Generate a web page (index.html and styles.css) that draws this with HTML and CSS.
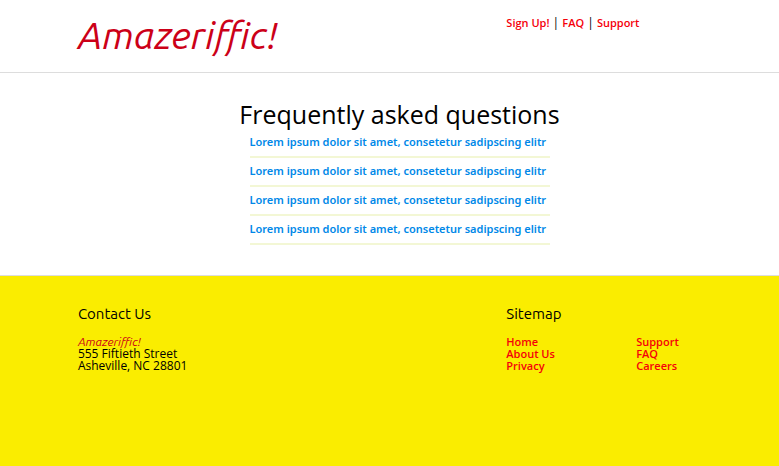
FILE: index.html
```html
<!DOCTYPE html>
<html lang="en">
<head>
<meta charset="utf-8">
<title>Amazeriffic!</title>
<link rel="stylesheet" href="styles.css">
</head>
<body>
<header>
  <div class="container columns">
    <h1>Amazeriffic!</h1>
    <nav class="links"><a href="#">Sign Up!</a> | <a href="#">FAQ</a> | <a href="#">Support</a></nav>
  </div>
</header>
<main>
  <h2>Frequently asked questions</h2>
  <ul class="faq">
    <li><a href="#">Lorem ipsum dolor sit amet, consetetur sadipscing elitr</a></li>
    <li><a href="#">Lorem ipsum dolor sit amet, consetetur sadipscing elitr</a></li>
    <li><a href="#">Lorem ipsum dolor sit amet, consetetur sadipscing elitr</a></li>
    <li><a href="#">Lorem ipsum dolor sit amet, consetetur sadipscing elitr</a></li>
  </ul>
</main>
<footer>
  <div class="container columns">
    <section>
      <h3>Contact Us</h3>
      <address><em>Amazeriffic!</em><br>555 Fiftieth Street<br>Asheville, NC 28801</address>
    </section>
    <section>
      <h3>Sitemap</h3>
      <div class="sitemap">
        <ul><li><a href="#">Home</a></li><li><a href="#">About Us</a></li><li><a href="#">Privacy</a></li></ul>
        <ul><li><a href="#">Support</a></li><li><a href="#">FAQ</a></li><li><a href="#">Careers</a></li></ul>
      </div>
    </section>
  </div>
</footer>
</body>
</html>
```
FILE: styles.css
```css
* {
  box-sizing: border-box;
  margin: 0;
  padding: 0;
}

body {
  display: flex;
  flex-direction: column;
  min-height: 100vh;
  background: #fff;
  color: #000;
  font: 12px/12px "Open Sans", "Noto Sans", sans-serif;
}

ul {
  list-style: none;
}

a {
  color: #f5000a;
  font-size: 11px;
  font-weight: 600;
  text-decoration: none;
}

h1,
h3,
em {
  font-family: Ubuntu, "Noto Sans", sans-serif;
}

.container {
  margin: 0 10%;
}

.columns {
  display: grid;
  grid-template-columns: 11fr 5fr;
}

header {
  padding: 15px 0 17px;
  border-bottom: 1px solid #ddd;
}

h1 {
  color: #cc0018;
  font-size: 38px;
  font-style: italic;
  font-weight: 400;
  line-height: 40px;
}

.links {
  padding-top: 2px;
}

main {
  padding: 27px 0 30px 20px;
}

h2 {
  font-size: 25px;
  font-weight: 400;
  line-height: 29px;
  text-align: center;
}

.faq {
  width: 300px;
  margin: 0 auto;
}

.faq li {
  padding: 7px 0 8px;
  border-bottom: 2px solid #f3f7d5;
  white-space: nowrap;
}

.faq a {
  color: #0088e8;
  font-family: "Noto Sans", sans-serif;
}

footer {
  flex: 1;
  padding-top: 29px;
  border-top: 1px solid #ddd;
  background: #faed00;
}

h3 {
  margin-bottom: 13px;
  font-size: 15px;
  font-weight: 400;
  line-height: 18px;
}

address {
  font-style: normal;
}

em {
  color: #cc0018;
}

.sitemap {
  display: grid;
  grid-template-columns: 2fr 1fr;
}
```
